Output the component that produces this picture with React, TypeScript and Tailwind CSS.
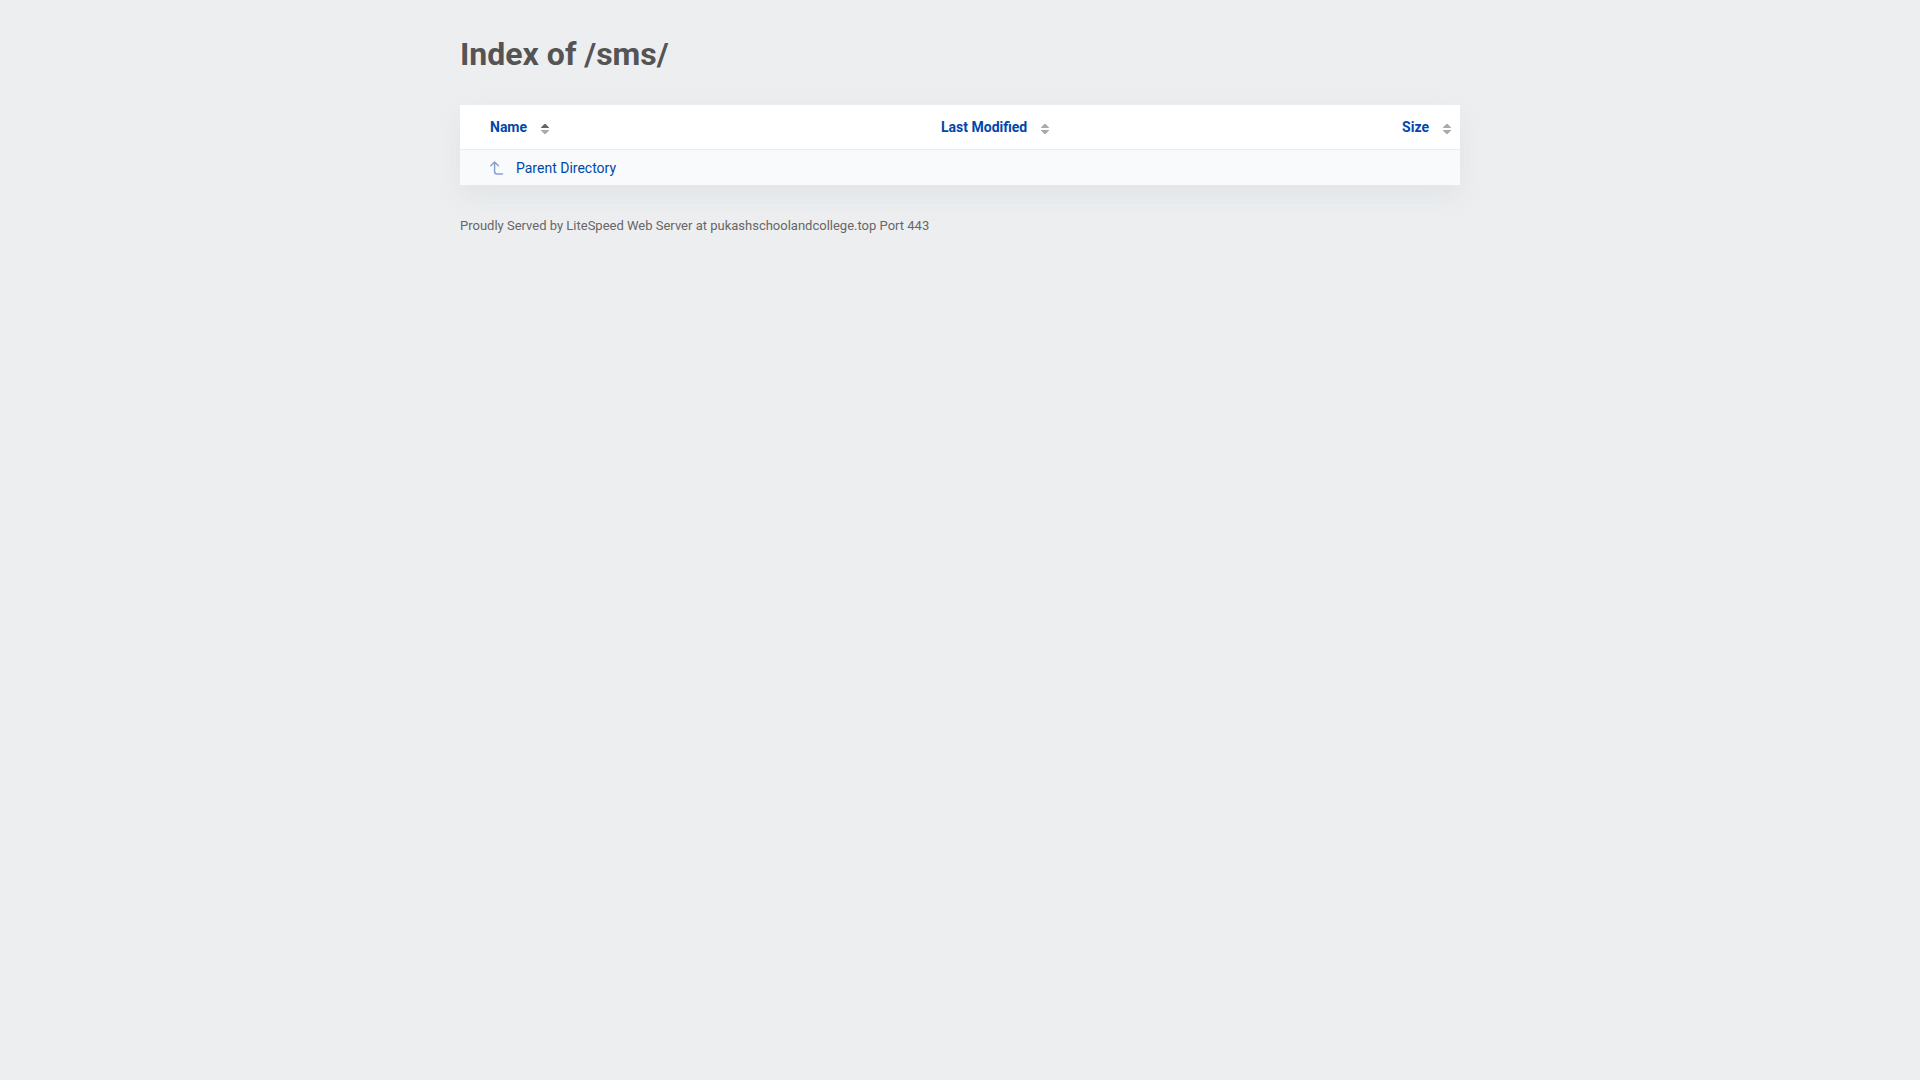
const SortIcon = ({ active }: { active?: boolean }) => (
  <svg width="8" height="10" viewBox="0 0 8 10" className="mt-1" aria-hidden="true">
    <path d="M0 4V3.6L3.4 0H4.6L8 3.6V4Z" fill={active ? "#666" : "#aaa"} />
    <path d="M0 6H8V6.4L4.6 10H3.4L0 6.4Z" fill="#aaa" />
  </svg>
);

const ParentIcon = () => (
  <svg
    width="14"
    height="14"
    viewBox="0 0 14 14"
    fill="none"
    stroke="#86a3cf"
    strokeWidth="1.5"
    strokeLinecap="round"
    strokeLinejoin="round"
    aria-hidden="true"
  >
    <path d="M.8 4.8 4.6 1 8.4 4.8M4.6 1V10.5Q4.6 13 7 13H12.5" />
  </svg>
);

const HeaderLink = ({ label, active }: { label: string; active?: boolean }) => (
  <a href="#" className="inline-flex items-center gap-[14px]">
    {label}
    <SortIcon active={active} />
  </a>
);

const App = () => (
  <div className="min-h-screen px-5 py-8 bg-[#edeef0] text-[#545454] font-[Roboto,sans-serif] text-sm">
    <div className="max-w-[1000px] mx-auto">
      <h1 className="text-[32px] leading-[44px] font-bold">Index of /sms/</h1>
      <table className="w-full mt-[29px] bg-white text-[#0047ab] shadow-[0_10px_25px_rgba(166,190,190,0.18)]">
        <thead>
          <tr className="h-11 border-b border-[#e9edf0]">
            <th className="w-[45%] pl-[30px] text-left font-bold">
              <HeaderLink label="Name" active />
            </th>
            <th className="pl-[31px] text-left font-bold">
              <HeaderLink label="Last Modified" />
            </th>
            <th className="pr-[9px] text-right font-bold">
              <HeaderLink label="Size" />
            </th>
          </tr>
        </thead>
        <tbody>
          <tr className="h-9 bg-[#f9fafc]">
            <td className="pl-[30px] pt-1">
              <a href="../" className="inline-flex items-center gap-3">
                <ParentIcon />
                Parent Directory
              </a>
            </td>
            <td />
            <td />
          </tr>
        </tbody>
      </table>
      <footer className="mt-[33px] text-[13px] leading-4 text-[#666]">
        Proudly Served by LiteSpeed Web Server at pukashschoolandcollege.top Port 443
      </footer>
    </div>
  </div>
);

export default App;
